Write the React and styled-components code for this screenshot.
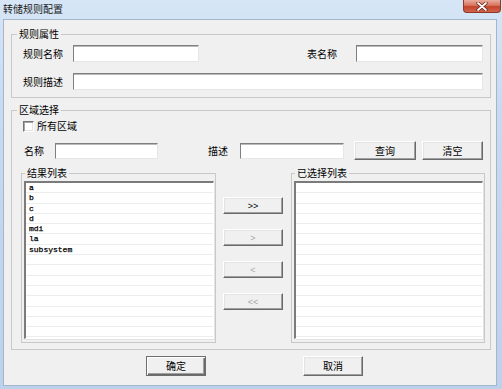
import React from 'react';
import styled, { createGlobalStyle } from 'styled-components';

const GlobalStyle = createGlobalStyle`
  html, body {
    margin: 0;
    padding: 0;
  }
  body {
    background: #c0d5ee;
    font-family: "Noto Sans CJK SC", "Liberation Sans", sans-serif;
  }
`;

const Window = styled.div`
  width: 502px;
  height: 389px;
  display: flex;
  flex-direction: column;
  background: linear-gradient(180deg, #d6e6f7 0%, #c6daf0 30%, #bcd2ec 100%);
  overflow: hidden;
`;

const TitleBar = styled.div`
  height: 19px;
  flex: none;
  display: flex;
  align-items: flex-start;
  justify-content: space-between;
  padding-left: 3px;
`;

const Title = styled.div`
  font-size: 10px;
  line-height: 12px;
  margin-top: 3px;
  color: #1a1a1a;
`;

const CloseButton = styled.div`
  width: 38px;
  height: 13px;
  margin-right: 1px;
  box-sizing: border-box;
  border: 1px solid #8c3728;
  border-top: none;
  border-radius: 0 0 4px 4px;
  background: linear-gradient(180deg, #e9ad9f 0%, #d7735d 45%, #c3432c 55%, #d2654a 100%);
  display: flex;
  align-items: center;
  justify-content: center;
`;

const Client = styled.div`
  flex: 1;
  margin: 0 5px 3px 3px;
  background: #f0f0f0;
  border: 1px solid #a3b6cb;
  padding: 7px 5px 0 7px;
  box-sizing: border-box;
  display: flex;
  flex-direction: column;
`;

const Group = styled.fieldset`
  margin: 0;
  min-width: 0;
  box-sizing: border-box;
  border: 1px solid #c8c8c8;
  height: ${(p) => p.$h}px;
  width: ${(p) => (p.$w ? `${p.$w}px` : 'auto')};
  flex: none;
  padding: ${(p) => p.$pad};
`;

const Legend = styled.legend`
  font-size: 10px;
  line-height: 14px;
  padding: 0 2px;
  margin-left: ${(p) => p.$x}px;
  color: #000;
`;

const Row = styled.div`
  display: flex;
  align-items: center;
  height: ${(p) => p.$h || 17}px;
  margin-top: ${(p) => p.$top || 0}px;
`;

const Label = styled.span`
  font-size: 10px;
  line-height: 12px;
  color: #000;
  white-space: nowrap;
  flex: none;
  width: ${(p) => (p.$w ? `${p.$w}px` : 'auto')};
  padding-left: ${(p) => p.$pl || 0}px;
  box-sizing: border-box;
  margin-left: ${(p) => p.$ml || 0}px;
  margin-right: ${(p) => p.$mr || 0}px;
`;

const TextBox = styled.input`
  height: ${(p) => p.$h || 17}px;
  box-sizing: border-box;
  background: #fff;
  border-style: solid;
  border-width: 1px;
  border-color: #7f7f7f #e6e6e6 #e6e6e6 #7f7f7f;
  box-shadow: inset 0 1px 0 #b9b9b9;
  outline: none;
  padding: 0 2px;
  margin: 0;
  font-size: 10px;
  width: ${(p) => (p.$w ? `${p.$w}px` : 'auto')};
  flex: ${(p) => (p.$w ? 'none' : '1')};
  min-width: 0;
`;

const Spacer = styled.div`
  flex: 1;
`;

const Button = styled.button`
  width: ${(p) => p.$w}px;
  height: ${(p) => p.$h}px;
  flex: none;
  box-sizing: border-box;
  padding: 0;
  margin: 0;
  background: #f0f0f0;
  font-family: ${(p) => (p.$arrow ? '"Liberation Sans", sans-serif' : '"Noto Sans CJK SC", sans-serif')};
  font-size: ${(p) => (p.$arrow ? 9 : 10)}px;
  line-height: 12px;
  color: ${(p) => (p.disabled ? '#a8a8a8' : '#000')};
  border: 1px solid;
  border-color: ${(p) => (p.$default ? '#6e6e6e' : '#fff #696969 #696969 #fff')};
  box-shadow: ${(p) =>
    p.$default
      ? 'inset 1px 1px 0 #fff, inset -1px -1px 0 #696969, inset -2px -2px 0 #a0a0a0'
      : 'inset -1px -1px 0 #a0a0a0, inset 1px 1px 0 #e3e3e3'};
  margin-left: ${(p) => p.$ml || 0}px;
`;

const CheckRow = styled.div`
  display: flex;
  align-items: center;
  height: 14px;
  margin-top: 2px;
  padding-left: 2px;
  gap: 3px;
`;

const CheckBox = styled.span`
  width: 11px;
  height: 11px;
  box-sizing: border-box;
  border: 1px solid;
  border-color: #747474 #fff #fff #747474;
  box-shadow: inset 1px 1px 0 #a5a5a5, inset -1px -1px 0 #e3e3e3;
  background: #fff;
`;

const ListsRow = styled.div`
  display: flex;
  margin-top: 6px;
`;

const ListBox = styled.div`
  height: 158px;
  box-sizing: border-box;
  background: #fff;
  border-style: solid;
  border-width: 2px 1px 1px 2px;
  border-color: #7b7b7b #fff #fff #7b7b7b;
  box-shadow: 1px 1px 0 #e3e3e3;
  overflow: hidden;
`;

const ListRow = styled.div`
  height: 10.3px;
  box-sizing: border-box;
  border-bottom: 1px solid #ededed;
  padding-left: 3px;
  font-family: "Liberation Mono", "DejaVu Sans Mono", monospace;
  font-size: 8px;
  line-height: 9px;
  color: #000;
  -webkit-text-stroke: 0.25px #000;
  white-space: pre;
`;

const MoveColumn = styled.div`
  width: 60px;
  flex: none;
  margin: 0 8px 0 7px;
  padding-top: 31px;
  display: flex;
  flex-direction: column;
  gap: 15px;
`;

const Footer = styled.div`
  display: flex;
  margin-top: 6px;
  padding-left: 135px;
  gap: 97px;
`;

const results = ['a', 'b', 'c', 'd', 'mdi', 'la', 'subsystem'];

function List({ items }) {
  const rows = [];
  for (let i = 0; i < 15; i++) rows.push(items[i] || '');
  return (
    <ListBox>
      {rows.map((t, i) => (
        <ListRow key={i}>{t}</ListRow>
      ))}
    </ListBox>
  );
}

export default function App() {
  return (
    <>
      <GlobalStyle />
      <Window>
        <TitleBar>
          <Title>转储规则配置</Title>
          <CloseButton>
            <svg width="12" height="9" viewBox="0 0 12 9">
              <path d="M2 1 L10 8 M10 1 L2 8" stroke="#5a1a10" strokeWidth="3.2" strokeLinecap="round" />
              <path d="M2 1 L10 8 M10 1 L2 8" stroke="#fff" strokeWidth="1.8" strokeLinecap="round" />
            </svg>
          </CloseButton>
        </TitleBar>
        <Client>
          <Group $h={71} $pad="4px 7px 0 11px">
            <Legend $x={-6}>规则属性</Legend>
            <Row>
              <Label $w={50}>规则名称</Label>
              <TextBox $w={126} readOnly />
              <Spacer />
              <Label $mr={19}>表名称</Label>
              <TextBox $w={127} readOnly />
            </Row>
            <Row $top={11}>
              <Label $w={50}>规则描述</Label>
              <TextBox readOnly />
            </Row>
          </Group>
          <Group $h={247} $pad="0 5px 0 9px" style={{ marginTop: 5 }}>
            <Legend $x={-4}>区域选择</Legend>
            <CheckRow>
              <CheckBox />
              <Label>所有区域</Label>
            </CheckRow>
            <Row $h={19} $top={8}>
              <Label $w={34} $pl={3}>名称</Label>
              <TextBox $w={103} $h={16} readOnly />
              <Spacer />
              <Label $w={32}>描述</Label>
              <TextBox $w={104} $h={16} readOnly />
              <Button $w={62} $h={19} $ml={10}>查询</Button>
              <Button $w={61} $h={19} $ml={6}>清空</Button>
              <div style={{ width: 2 }} />
            </Row>
            <ListsRow>
              <Group $h={177} $w={195} $pad="1px 1px 3px 2px">
                <Legend $x={1}>结果列表</Legend>
                <List items={results} />
              </Group>
              <MoveColumn>
                <Button $w={60} $h={17} $arrow>&gt;&gt;</Button>
                <Button $w={60} $h={17} $arrow disabled>&gt;</Button>
                <Button $w={60} $h={17} $arrow disabled>&lt;</Button>
                <Button $w={60} $h={17} $arrow disabled>&lt;&lt;</Button>
              </MoveColumn>
              <Group $h={177} $w={194} $pad="1px 1px 3px 2px">
                <Legend $x={1}>已选择列表</Legend>
                <List items={[]} />
              </Group>
            </ListsRow>
          </Group>
          <Footer>
            <Button $w={60} $h={20} $default>确定</Button>
            <Button $w={60} $h={20}>取消</Button>
          </Footer>
        </Client>
      </Window>
    </>
  );
}
